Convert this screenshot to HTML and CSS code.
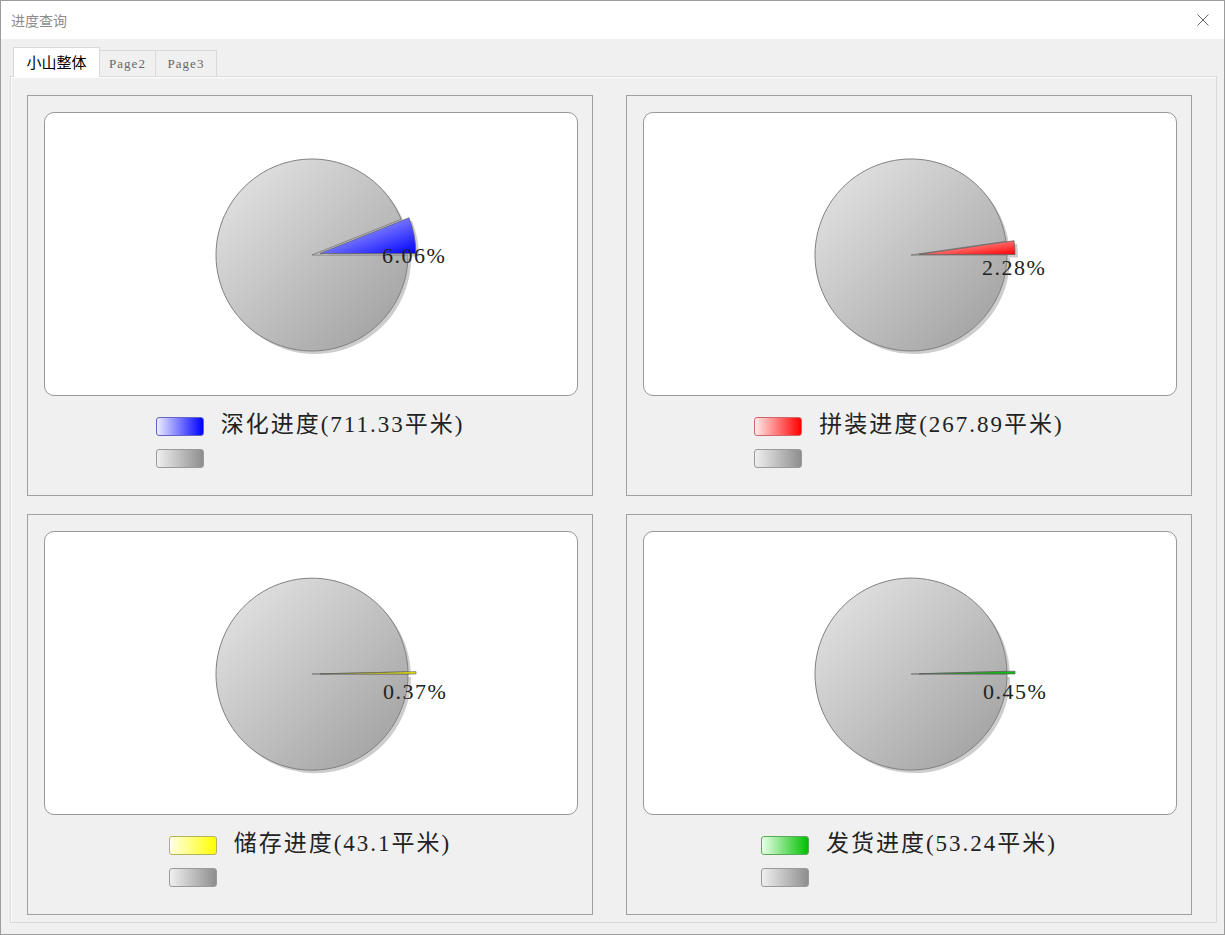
FILE: index.html
```html
<!DOCTYPE html>
<html lang="zh-CN">
<head>
    <meta charset="UTF-8">
    <title>进度查询</title>
    <link rel="stylesheet" href="styles.css">
</head>
<body>
<div class="window">
    <div class="titlebar">
        <span class="title">进度查询</span>
        <svg class="close" width="12" height="12" viewBox="0 0 12 12">
            <path d="M0.5 0.5 L11.5 11.5 M11.5 0.5 L0.5 11.5" stroke="#666" stroke-width="1" fill="none"/>
        </svg>
    </div>
    <div class="client">
        <div class="tabs">
            <div class="tab active">小山整体</div>
            <div class="tab">Page2</div>
            <div class="tab">Page3</div>
        </div>
        <div class="tab-page">

            <!-- 深化 -->
            <div class="group">
                <div class="chart">
                    <svg width="532" height="282" viewBox="0 0 532 282">
                        <defs>
                            <linearGradient id="gray1" x1="0" y1="0" x2="1" y2="1">
                                <stop offset="0" stop-color="#e8e8e8"/>
                                <stop offset="1" stop-color="#9c9c9c"/>
                            </linearGradient>
                            <linearGradient id="slice1" x1="0" y1="0" x2="1" y2="1">
                                <stop offset="0" stop-color="#d4d4ff"/>
                                <stop offset="1" stop-color="#0000ff"/>
                            </linearGradient>
                        </defs>
                        <path class="shadow" d="M267,142 L356.12,106.32 A96,96 0 1 0 363,142 Z" transform="translate(3,3)"/>
                        <path class="shadow" d="M274.86,140.49 L370.86,140.49 A96,96 0 0 0 363.98,104.81 Z" transform="translate(3,3)"/>
                        <path class="pie" fill="url(#gray1)" d="M267,142 L356.12,106.32 A96,96 0 1 0 363,142 Z"/>
                        <path class="slice" fill="url(#slice1)" d="M274.86,140.49 L370.86,140.49 A96,96 0 0 0 363.98,104.81 Z"/>
                        <text class="pct" x="337" y="142">6.06%</text>
                    </svg>
                </div>
                <div class="legend">
                    <span class="swatch blue"></span>
                    <span class="legend-text">深化进度(711.33平米)</span>
                    <span class="swatch gray"></span>
                </div>
            </div>

            <!-- 拼装 -->
            <div class="group">
                <div class="chart">
                    <svg width="532" height="282" viewBox="0 0 532 282">
                        <defs>
                            <linearGradient id="gray2" x1="0" y1="0" x2="1" y2="1">
                                <stop offset="0" stop-color="#e8e8e8"/>
                                <stop offset="1" stop-color="#9c9c9c"/>
                            </linearGradient>
                            <linearGradient id="slice2" x1="0" y1="0" x2="1" y2="1">
                                <stop offset="0" stop-color="#ffd0d0"/>
                                <stop offset="1" stop-color="#ff0000"/>
                            </linearGradient>
                        </defs>
                        <path class="shadow" d="M267,142 L362.02,128.29 A96,96 0 1 0 363,142 Z" transform="translate(3,3)"/>
                        <path class="shadow" d="M274.98,141.43 L370.98,141.43 A96,96 0 0 0 370,127.72 Z" transform="translate(3,3)"/>
                        <path class="pie" fill="url(#gray2)" d="M267,142 L362.02,128.29 A96,96 0 1 0 363,142 Z"/>
                        <path class="slice" fill="url(#slice2)" d="M274.98,141.43 L370.98,141.43 A96,96 0 0 0 370,127.72 Z"/>
                        <text class="pct" x="338" y="154">2.28%</text>
                    </svg>
                </div>
                <div class="legend">
                    <span class="swatch red"></span>
                    <span class="legend-text">拼装进度(267.89平米)</span>
                    <span class="swatch gray"></span>
                </div>
            </div>

            <!-- 储存 -->
            <div class="group">
                <div class="chart">
                    <svg width="532" height="282" viewBox="0 0 532 282">
                        <defs>
                            <linearGradient id="gray3" x1="0" y1="0" x2="1" y2="1">
                                <stop offset="0" stop-color="#e8e8e8"/>
                                <stop offset="1" stop-color="#9c9c9c"/>
                            </linearGradient>
                        </defs>
                        <path class="shadow" d="M267,142 L362.97,139.77 A96,96 0 1 0 363,142 Z" transform="translate(3,3)"/>
                        <path class="pie" fill="url(#gray3)" d="M267,142 L362.97,139.77 A96,96 0 1 0 363,142 Z"/>
                        <path class="slice" fill="#f4f400" d="M275,141.91 L371,141.91 A96,96 0 0 0 370.97,139.68 Z"/>
                        <text class="pct" x="338" y="159">0.37%</text>
                    </svg>
                </div>
                <div class="legend">
                    <span class="swatch yellow"></span>
                    <span class="legend-text">储存进度(43.1平米)</span>
                    <span class="swatch gray"></span>
                </div>
            </div>

            <!-- 发货 -->
            <div class="group">
                <div class="chart">
                    <svg width="532" height="282" viewBox="0 0 532 282">
                        <defs>
                            <linearGradient id="gray4" x1="0" y1="0" x2="1" y2="1">
                                <stop offset="0" stop-color="#e8e8e8"/>
                                <stop offset="1" stop-color="#9c9c9c"/>
                            </linearGradient>
                        </defs>
                        <path class="shadow" d="M267,142 L362.96,139.29 A96,96 0 1 0 363,142 Z" transform="translate(3,3)"/>
                        <path class="pie" fill="url(#gray4)" d="M267,142 L362.96,139.29 A96,96 0 1 0 363,142 Z"/>
                        <path class="slice" fill="#10c010" d="M275,141.89 L371,141.89 A96,96 0 0 0 370.96,139.17 Z"/>
                        <text class="pct" x="339" y="159">0.45%</text>
                    </svg>
                </div>
                <div class="legend">
                    <span class="swatch green"></span>
                    <span class="legend-text">发货进度(53.24平米)</span>
                    <span class="swatch gray"></span>
                </div>
            </div>

        </div>
    </div>
</div>
</body>
</html>
```

FILE: styles.css
```css
body {
    margin: 0;
    font-family: "Noto Sans CJK SC", sans-serif;
    background: #ffffff;
}
.window {
    width: 1225px;
    height: 935px;
    box-sizing: border-box;
    border: 1px solid #9c9c9c;
    display: flex;
    flex-direction: column;
    background: #f0f0f0;
}
.titlebar {
    height: 38px;
    flex: none;
    background: #ffffff;
    display: flex;
    align-items: center;
    justify-content: space-between;
    padding: 0 15px 0 10px;
}
.title {
    font-size: 14px;
    color: #8c8c8c;
}
.close {
    display: block;
}
.client {
    flex: 1;
    display: flex;
    flex-direction: column;
    padding: 8px 7px 11px 9px;
}
.tabs {
    display: flex;
    align-items: flex-end;
    margin-left: 3px;
}
.tab {
    height: 26px;
    box-sizing: border-box;
    border: 1px solid #d9d9d9;
    border-bottom: none;
    background: #f0f0f0;
    font-family: "Liberation Serif", serif;
    font-size: 13px;
    letter-spacing: 1px;
    color: #666;
    display: flex;
    align-items: center;
    justify-content: center;
    width: 57px;
    margin-left: -1px;
}
.tab:last-child {
    width: 62px;
}
.tab.active {
    width: 87px;
    height: 30px;
    margin-left: 0;
    margin-bottom: -1px;
    background: #ffffff;
    font-family: "Noto Sans CJK SC", sans-serif;
    font-size: 15px;
    letter-spacing: 0;
    color: #000;
    position: relative;
    z-index: 1;
    padding-bottom: 2px;
}
.tab-page {
    flex: 1;
    border: 1px solid #d9d9d9;
    box-shadow: inset 1px 1px 0 #ffffff;
    padding: 18px 0 0 16px;
    display: grid;
    grid-template-columns: 566px 566px;
    grid-template-rows: 401px 401px;
    column-gap: 33px;
    row-gap: 18px;
    align-content: start;
}
.group {
    box-sizing: border-box;
    border: 1px solid #a0a0a0;
    display: flex;
    flex-direction: column;
}
.chart {
    width: 534px;
    height: 284px;
    box-sizing: border-box;
    margin: 16px 0 0 16px;
    border: 1px solid #999999;
    border-radius: 10px;
    background: #ffffff;
    overflow: hidden;
}
.chart svg {
    display: block;
}
.shadow {
    fill: #cdcdcd;
}
.pie {
    stroke: #808080;
    stroke-width: 1;
}
.slice {
    stroke: #5a5a5a;
    stroke-opacity: 0.7;
    stroke-width: 1;
}
.pct {
    font-family: "Liberation Serif", serif;
    font-size: 22px;
    letter-spacing: 1.5px;
    fill: #222;
    dominant-baseline: central;
}
.legend {
    align-self: center;
    margin-top: 13px;
    display: grid;
    grid-template-columns: 48px auto;
    grid-template-rows: 32px 19px;
    column-gap: 17px;
    row-gap: 8px;
}
.legend-text {
    font-family: "Liberation Serif", "Noto Sans CJK SC", serif;
    font-size: 23px;
    line-height: 32px;
    color: #222;
    letter-spacing: 2px;
}
.swatch {
    width: 48px;
    height: 19px;
    box-sizing: border-box;
    border-radius: 3px;
    border: 1px solid #999;
}
.legend .swatch:first-child {
    margin-top: 8px;
}
.swatch.gray {
    grid-column: 1;
    background: linear-gradient(to right, #efefef, #8e8e8e);
    border-color: #9a9a9a;
}
.swatch.blue {
    background: linear-gradient(to right, #ececff, #0000ff);
    border-color: #6464c8;
}
.swatch.red {
    background: linear-gradient(to right, #ffeaea, #ff0000);
    border-color: #d06868;
}
.swatch.yellow {
    background: linear-gradient(to right, #ffffe8, #ffff00);
    border-color: #b4b45a;
}
.swatch.green {
    background: linear-gradient(to right, #e8ffe8, #00c000);
    border-color: #5aa85a;
}
```
